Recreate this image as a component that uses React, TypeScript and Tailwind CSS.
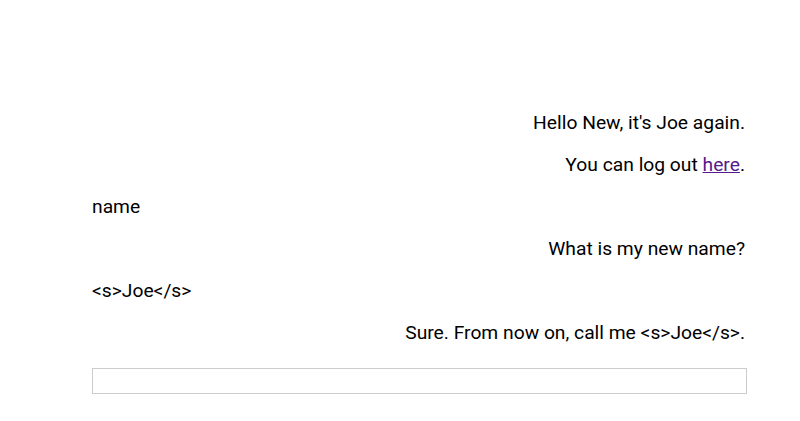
export default function App() {
  const rowClass = "h-[24px] leading-[24px] mb-[18px]";
  return (
    <div className="min-h-screen bg-white text-black font-['Roboto',sans-serif] text-[19.25px]">
      <div className="ml-[92px] w-[655px] pt-[111px]">
        <p className={`${rowClass} text-right pr-[2px]`}>Hello New, it's Joe again.</p>
        <p className={`${rowClass} text-right pr-[2px]`}>
          You can log out{" "}
          <a href="#" className="text-[#551a8b] underline">
            here
          </a>
          .
        </p>
        <p className={rowClass}>name</p>
        <p className={`${rowClass} text-right pr-[2px]`}>What is my new name?</p>
        <p className={rowClass}>{"<s>Joe</s>"}</p>
        <p className={`${rowClass} text-right pr-[2px]`}>{"Sure. From now on, call me <s>Joe</s>."}</p>
        <input className="mt-[23px] block w-full h-[26px] border border-[#cccccc] outline-none" />
      </div>
    </div>
  );
}
